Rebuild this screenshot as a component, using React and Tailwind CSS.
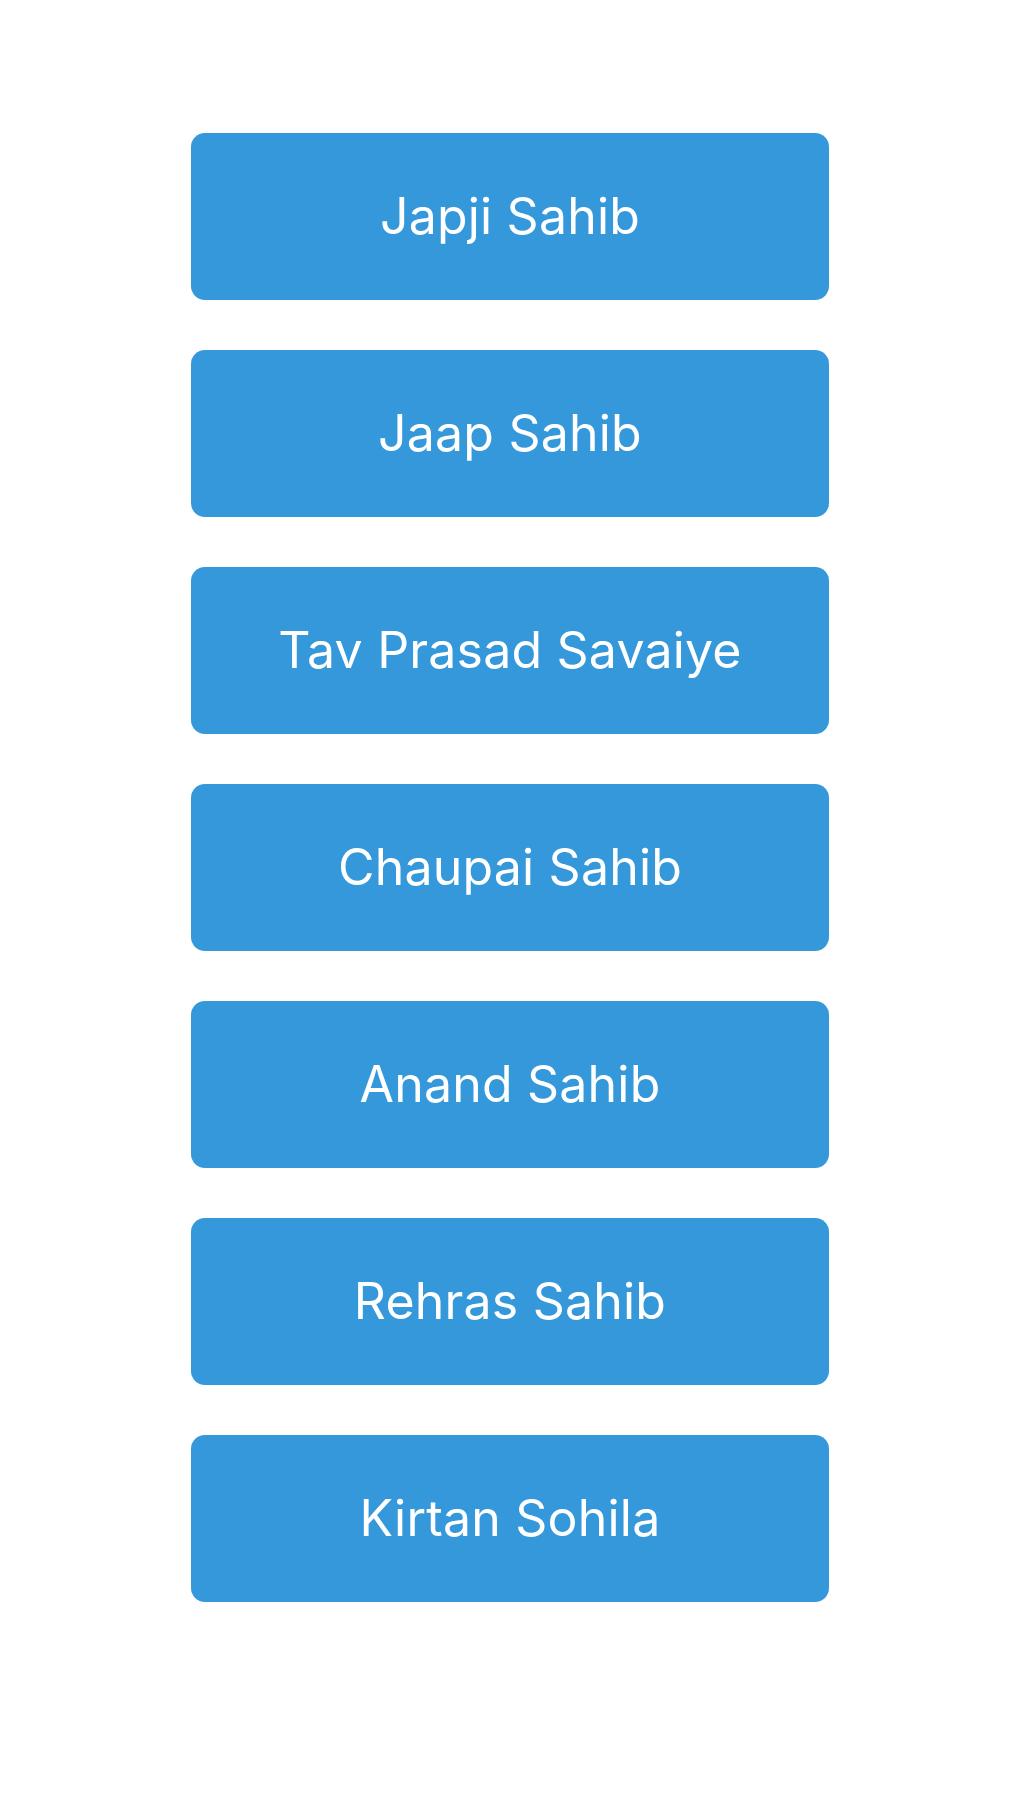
import React from "react";

const banis = [
  "Japji Sahib",
  "Jaap Sahib",
  "Tav Prasad Savaiye",
  "Chaupai Sahib",
  "Anand Sahib",
  "Rehras Sahib",
  "Kirtan Sohila",
];

const App = () => {
  return (
    <div className="min-h-[1813px] bg-white flex flex-col items-center gap-[50px] pt-[133px] font-['Inter',sans-serif]">
      {banis.map((name) => (
        <button
          key={name}
          className="w-[638px] h-[167px] rounded-[14px] bg-[#3498db] text-white text-[50px] tracking-[0.2px] flex items-center justify-center"
        >
          {name}
        </button>
      ))}
    </div>
  );
};

export default App;
